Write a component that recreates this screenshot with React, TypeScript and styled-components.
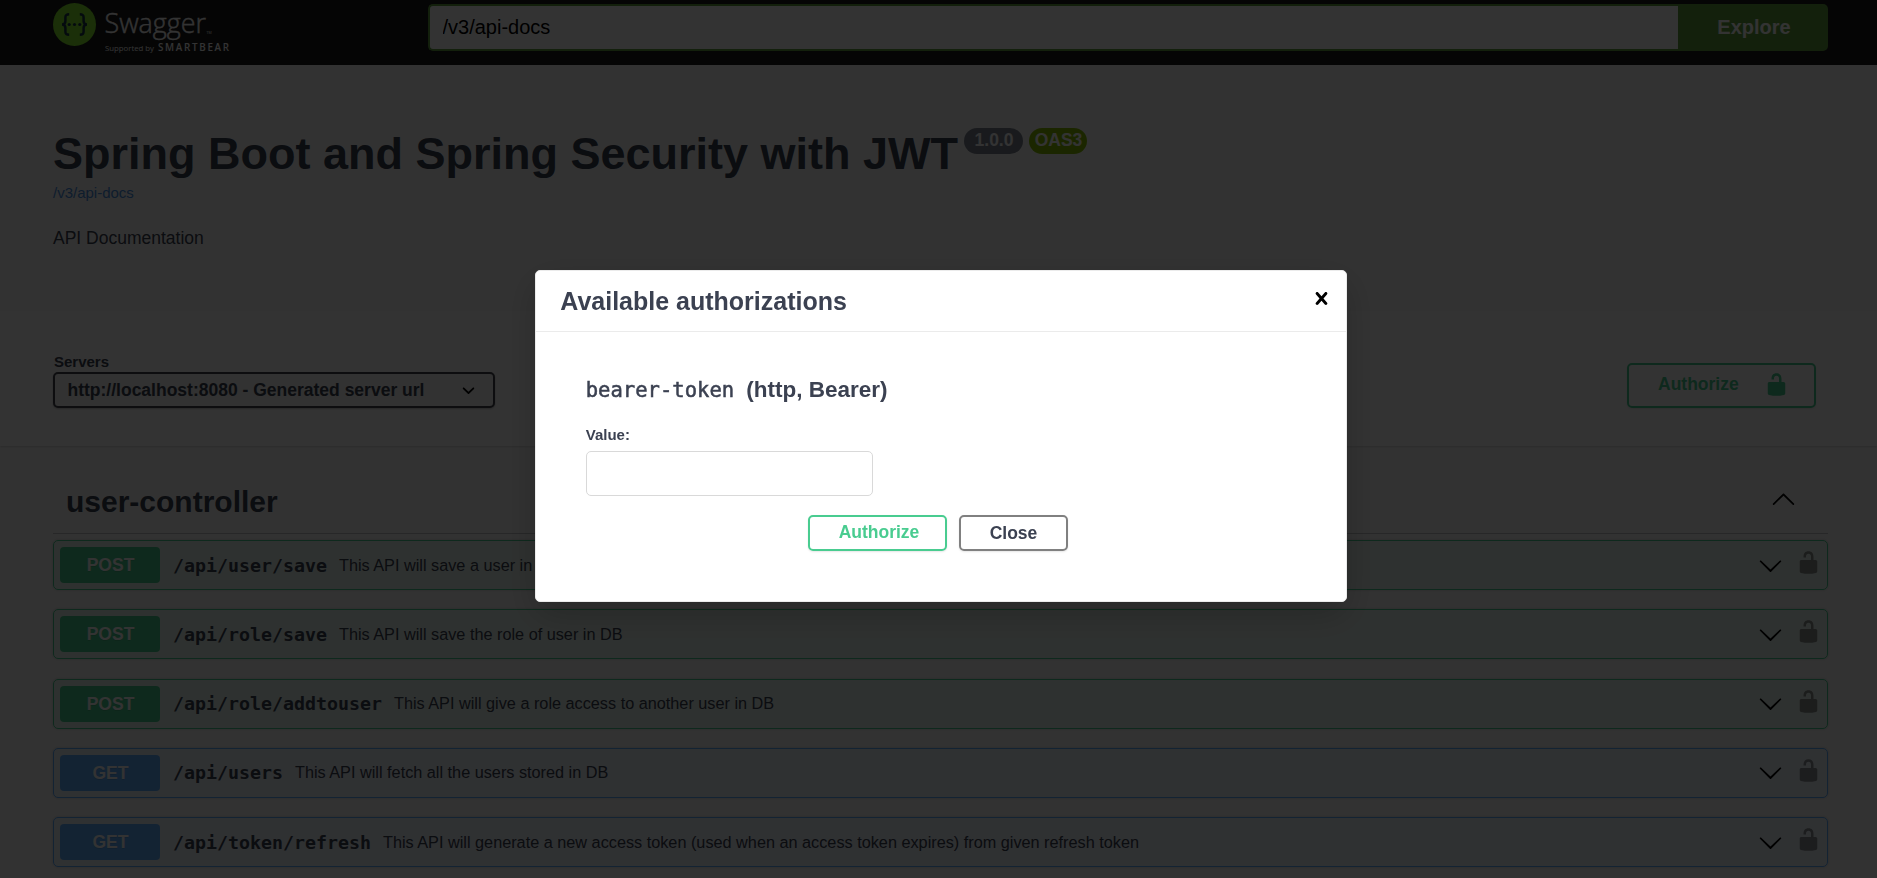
import React from 'react';
import styled, { createGlobalStyle } from 'styled-components';

const sans = "'Liberation Sans', Arial, sans-serif";
const mono = "'DejaVu Sans Mono', monospace";

const GlobalStyle = createGlobalStyle`
  *, *::before, *::after { box-sizing: border-box; }
  html, body { margin: 0; background: #fafafa; overflow: hidden; }
  body { font-family: ${sans}; color: #3b4151; }
  h2, h3, h4, p { margin: 0; }
  button, input { font-family: inherit; }
`;

const Page = styled.div`
  height: 878px;
  overflow: hidden;
  background: #fafafa;
`;

const Topbar = styled.header`
  display: flex;
  align-items: flex-start;
  height: 65px;
  padding: 0 49px 0 53px;
  background: #1b1b1b;
`;

const LogoSvg = styled.svg`
  display: block;
  flex: none;
  width: 375px;
  height: 65px;
`;

const SearchForm = styled.form`
  display: flex;
  flex: 1;
  height: 47px;
  margin-top: 4px;
`;

const UrlInput = styled.input`
  flex: 1;
  min-width: 0;
  padding: 0 12.5px;
  border: 2px solid #62a03f;
  border-right: 0;
  border-radius: 5px 0 0 5px;
  background: #fff;
  color: #000;
  font-size: 20px;
  outline: none;
`;

const ExploreButton = styled.button`
  width: 150px;
  padding: 0 0 1px 2px;
  border: 0;
  border-radius: 0 5px 5px 0;
  background: #62a03f;
  color: #fff;
  font-size: 20px;
  font-weight: 700;
`;

const Info = styled.section`
  height: 246px;
  padding: 63px 49px 0 53px;
`;

const TitleRow = styled.div`
  display: flex;
  align-items: flex-start;
`;

const Title = styled.h2`
  font-size: 45px;
  line-height: 52px;
  font-weight: 700;
`;

const Badge = styled.span<{ $bg: string; $width: number }>`
  width: ${(p) => p.$width}px;
  height: 26px;
  margin-left: 6px;
  padding-left: 1px;
  border-radius: 13px;
  background: ${(p) => p.$bg};
  color: #fff;
  font-size: 17.5px;
  line-height: 24px;
  font-weight: 700;
  text-align: center;
`;

const DocsLink = styled.a`
  display: block;
  margin-top: 4px;
  color: #4990e2;
  font-size: 15px;
  line-height: 18px;
`;

const Description = styled.p`
  margin-top: 26px;
  font-size: 17.5px;
  line-height: 20px;
`;

const SchemeBar = styled.section`
  display: flex;
  justify-content: space-between;
  align-items: flex-start;
  height: 135px;
  padding: 42px 61px 0 53px;
  background: #fff;
  box-shadow: 0 1px 2px rgba(0, 0, 0, 0.15);
`;

const ServersLabel = styled.div`
  padding-left: 1px;
  font-size: 15px;
  line-height: 18px;
  font-weight: 700;
`;

const ServerSelect = styled.div`
  display: flex;
  align-items: center;
  justify-content: space-between;
  width: 442px;
  height: 36px;
  margin-top: 1px;
  padding: 0 12px 0 12.5px;
  border: 2px solid #41444e;
  border-radius: 5px;
  background: #f7f7f7;
  box-shadow: 0 1px 2px rgba(0, 0, 0, 0.25);
  font-size: 17.5px;
  font-weight: 700;
`;

const AuthorizeButton = styled.button`
  display: flex;
  align-items: center;
  justify-content: space-between;
  width: 189px;
  height: 45px;
  margin-top: 10px;
  padding: 0 25px 2px 29px;
  border: 2px solid #49cc90;
  border-radius: 5px;
  background: transparent;
  box-shadow: 0 1px 2px rgba(0, 0, 0, 0.1);
  color: #49cc90;
  font-size: 17.5px;
  font-weight: 700;
`;

const Operations = styled.section`
  padding: 23px 49px 0 53px;
`;

const TagHeader = styled.div`
  display: flex;
  align-items: center;
  justify-content: space-between;
  height: 65px;
  margin-bottom: 6px;
  padding: 0 32px 0 13px;
  border-bottom: 1px solid rgba(59, 65, 81, 0.3);
`;

const TagName = styled.h3`
  padding-top: 2px;
  font-size: 30px;
  line-height: 36px;
  font-weight: 700;
`;

const ChevronSlot = styled.span`
  display: flex;
  margin-bottom: 5px;
`;

const OperationRow = styled.div<{ $color: string; $tint: string }>`
  display: flex;
  align-items: center;
  height: 50px;
  margin-bottom: 19.25px;
  padding: 0 6px;
  border: 1px solid ${(p) => p.$color};
  border-radius: 5px;
  background: ${(p) => p.$tint};
  box-shadow: 0 0 3px rgba(0, 0, 0, 0.19);
`;

const Method = styled.span<{ $color: string }>`
  width: 100px;
  height: 36px;
  padding-left: 1px;
  border-radius: 4px;
  background: ${(p) => p.$color};
  color: #fff;
  font-size: 17.5px;
  line-height: 36px;
  font-weight: 700;
  text-align: center;
  text-shadow: 0 1px 0 rgba(0, 0, 0, 0.1);
`;

const Path = styled.span`
  padding: 0 12px 0 13px;
  font-family: ${mono};
  font-size: 18.27px;
  font-weight: 700;
`;

const Summary = styled.span`
  flex: 1;
  font-size: 16.25px;
`;

const LockSlot = styled.span`
  display: flex;
  margin: 0 0 5px 13px;
  opacity: 0.4;
  color: #000;
`;

const Icon = styled.svg`
  display: block;
  flex: none;
  width: 25px;
  height: 25px;
  fill: currentColor;
`;

const BlackIcon = styled(Icon)`
  fill: #000;
`;

const Backdrop = styled.div`
  position: fixed;
  inset: 0;
  display: flex;
  align-items: flex-start;
  justify-content: center;
  padding: 270px 0 0 5px;
  background: rgba(0, 0, 0, 0.8);
`;

const Modal = styled.div`
  width: 812.5px;
  border: 1px solid #ebebeb;
  border-radius: 5px;
  background: #fff;
  box-shadow: 0 12.5px 37.5px rgba(0, 0, 0, 0.2);
`;

const ModalHeader = styled.div`
  display: flex;
  align-items: center;
  justify-content: space-between;
  height: 61px;
  padding: 0 12px 0 24.5px;
  border-bottom: 1px solid #ebebeb;
`;

const ModalTitle = styled.h3`
  font-size: 25px;
  line-height: 30px;
  font-weight: 700;
`;

const CloseIconButton = styled.button`
  margin: 0 0 6px;
  padding: 0;
  border: 0;
  background: none;
`;

const ModalBody = styled.div`
  padding: 45px 50px 50px;
`;

const SchemeName = styled.h4`
  display: flex;
  align-items: baseline;
  gap: 12px;
  height: 26px;
  font-size: 22.5px;
  line-height: 26px;
  font-weight: 700;
`;

const SchemeCode = styled.code`
  font-family: ${mono};
  font-size: 20.55px;
  font-weight: 400;
  -webkit-text-stroke: 0.5px currentColor;
`;

const ValueLabel = styled.label`
  display: block;
  margin: 23px 0 7px;
  font-size: 15px;
  line-height: 18px;
  font-weight: 700;
`;

const ValueInput = styled.input`
  display: block;
  width: 287px;
  height: 45px;
  border: 1px solid #d9d9d9;
  border-radius: 5px;
  background: #fff;
`;

const ModalActions = styled.div`
  display: flex;
  justify-content: center;
  gap: 11.5px;
  margin-top: 19px;
  padding-right: 6.5px;
`;

const ModalButton = styled.button<{ $width: number; $border: string; $color: string }>`
  width: ${(p) => p.$width}px;
  height: 36px;
  padding: 1px 0 0 1px;
  border: 2px solid ${(p) => p.$border};
  border-radius: 5px;
  background: transparent;
  box-shadow: 0 1px 2px rgba(0, 0, 0, 0.1);
  color: ${(p) => p.$color};
  font-size: 17.5px;
  font-weight: 700;
`;

const PrimaryModalButton = styled(ModalButton)`
  padding: 0 0 2px 3px;
`;

const UnlockIcon = () => (
  <Icon viewBox="0 0 20 20">
    <path d="M15.8 8H14V5.6C14 2.703 12.665 1 10 1 7.334 1 6 2.703 6 5.6V6h2v-.801C8 3.754 8.797 3 10 3c1.203 0 2 .754 2 2.199V8H4c-.553 0-1 .646-1 1.199V17c0 .549.428 1.139.951 1.307l1.197.387C5.672 18.861 6.55 19 7.1 19h5.8c.549 0 1.428-.139 1.951-.307l1.196-.387c.524-.167.953-.757.953-1.306V9.199C17 8.646 16.352 8 15.8 8z" />
  </Icon>
);

const ArrowDown = () => (
  <BlackIcon viewBox="0 0 20 20">
    <path d="M17.418 6.109c.272-.268.709-.268.979 0s.271.701 0 .969l-7.908 7.83c-.27.268-.707.268-.979 0l-7.908-7.83c-.27-.268-.27-.701 0-.969.271-.268.709-.268.979 0L10 13.25l7.418-7.141z" />
  </BlackIcon>
);

const ArrowUp = () => (
  <BlackIcon viewBox="0 0 20 20">
    <path d="M17.418 14.908c.272.268.709.268.979 0s.271-.701 0-.969l-7.908-7.83c-.27-.268-.707-.268-.979 0l-7.908 7.83c-.27.268-.27.701 0 .969.271.268.709.268.979 0L10 7.767l7.418 7.141z" />
  </BlackIcon>
);

const SelectArrow = () => (
  <BlackIcon viewBox="0 0 20 20">
    <path d="M13.418 7.859c.271-.268.709-.268.978 0 .27.268.272.701 0 .969l-3.908 3.83c-.27.268-.707.268-.979 0l-3.908-3.83c-.27-.267-.27-.701 0-.969.271-.268.709-.268.978 0L10 11l3.418-3.141z" />
  </BlackIcon>
);

const CloseIcon = () => (
  <BlackIcon viewBox="0 0 20 20">
    <path d="M14.348 14.849c-.469.469-1.229.469-1.697 0L10 11.819l-2.651 3.029c-.469.469-1.229.469-1.697 0-.469-.469-.469-1.229 0-1.697l2.758-3.15-2.759-3.152c-.469-.469-.469-1.228 0-1.697.469-.469 1.228-.469 1.697 0L10 8.183l2.651-3.031c.469-.469 1.228-.469 1.697 0 .469.469.469 1.229 0 1.697l-2.758 3.152 2.758 3.15c.469.469.469 1.229 0 1.698z" />
  </BlackIcon>
);

const Logo = () => (
  <LogoSvg viewBox="0 0 375 65">
    <circle cx="21.5" cy="24.5" r="21.5" fill="#85ea2d" />
    <g fill="none" stroke="#173647" strokeWidth="2.5">
      <path d="M16.200 14.300c-3 0-3.800.9-3.800 3.300v3.400c0 2.200-.9 3.500-3.400 3.500 2.500 0 3.400 1.300 3.400 3.500v3.400c0 2.400.8 3.300 3.800 3.300" />
      <path d="M26.800 14.300c3 0 3.800.9 3.800 3.300v3.400c0 2.200.9 3.500 3.400 3.500-2.500 0-3.400 1.300-3.400 3.500v3.400c0 2.400-.8 3.300-3.800 3.300" />
    </g>
    <g fill="#173647">
      <circle cx="16.2" cy="24.5" r="1.6" />
      <circle cx="21.5" cy="24.5" r="1.6" />
      <circle cx="26.8" cy="24.5" r="1.6" />
    </g>
    <g fill="#fff" fontFamily="'Open Sans', 'Noto Sans', sans-serif">
      <text
        x="51.5"
        y="33"
        fontSize="27.5"
        fontWeight="300"
        stroke="#fff"
        strokeWidth="0.4"
        textLength="101.5"
        lengthAdjust="spacingAndGlyphs"
      >
        Swagger
      </text>
      <text x="153.5" y="33.5" fontSize="3.500">TM</text>
      <text x="52" y="51" fontSize="8" textLength="49" lengthAdjust="spacingAndGlyphs">
        Supported by
      </text>
      <text x="105" y="51" fontSize="9.8" fontWeight="600" textLength="71" lengthAdjust="spacing">
        SMARTBEAR
      </text>
    </g>
  </LogoSvg>
);

type Verb = 'POST' | 'GET';

const verbColors: Record<Verb, { color: string; tint: string }> = {
  POST: { color: '#49cc90', tint: 'rgba(73, 204, 144, 0.1)' },
  GET: { color: '#61affe', tint: 'rgba(97, 175, 254, 0.1)' },
};

const operations: { verb: Verb; path: string; summary: string }[] = [
  { verb: 'POST', path: '/api/user/save', summary: 'This API will save a user in DB' },
  { verb: 'POST', path: '/api/role/save', summary: 'This API will save the role of user in DB' },
  { verb: 'POST', path: '/api/role/addtouser', summary: 'This API will give a role access to another user in DB' },
  { verb: 'GET', path: '/api/users', summary: 'This API will fetch all the users stored in DB' },
  {
    verb: 'GET',
    path: '/api/token/refresh',
    summary: 'This API will generate a new access token (used when an access token expires) from given refresh token',
  },
];

export default function App() {
  return (
    <>
      <GlobalStyle />
      <Page>
        <Topbar>
          <Logo />
          <SearchForm>
            <UrlInput defaultValue="/v3/api-docs" />
            <ExploreButton type="button">Explore</ExploreButton>
          </SearchForm>
        </Topbar>

        <Info>
          <TitleRow>
            <Title>Spring Boot and Spring Security with JWT</Title>
            <Badge $bg="#7d8492" $width={59}>1.0.0</Badge>
            <Badge $bg="#89bf04" $width={58}>OAS3</Badge>
          </TitleRow>
          <DocsLink>/v3/api-docs</DocsLink>
          <Description>API Documentation</Description>
        </Info>

        <SchemeBar>
          <div>
            <ServersLabel>Servers</ServersLabel>
            <ServerSelect>
              http://localhost:8080 - Generated server url
              <SelectArrow />
            </ServerSelect>
          </div>
          <AuthorizeButton type="button">
            Authorize
            <UnlockIcon />
          </AuthorizeButton>
        </SchemeBar>

        <Operations>
          <TagHeader>
            <TagName>user-controller</TagName>
            <ChevronSlot>
              <ArrowUp />
            </ChevronSlot>
          </TagHeader>
          {operations.map((op) => (
            <OperationRow key={op.path} $color={verbColors[op.verb].color} $tint={verbColors[op.verb].tint}>
              <Method $color={verbColors[op.verb].color}>{op.verb}</Method>
              <Path>{op.path}</Path>
              <Summary>{op.summary}</Summary>
              <ArrowDown />
              <LockSlot>
                <UnlockIcon />
              </LockSlot>
            </OperationRow>
          ))}
        </Operations>
      </Page>

      <Backdrop>
        <Modal role="dialog">
          <ModalHeader>
            <ModalTitle>Available authorizations</ModalTitle>
            <CloseIconButton type="button">
              <CloseIcon />
            </CloseIconButton>
          </ModalHeader>
          <ModalBody>
            <SchemeName>
              <SchemeCode>bearer-token</SchemeCode>
              <span>(http, Bearer)</span>
            </SchemeName>
            <ValueLabel>Value:</ValueLabel>
            <ValueInput />
            <ModalActions>
              <PrimaryModalButton type="button" $width={139} $border="#49cc90" $color="#49cc90">
                Authorize
              </PrimaryModalButton>
              <ModalButton type="button" $width={109} $border="#808080" $color="#3b4151">
                Close
              </ModalButton>
            </ModalActions>
          </ModalBody>
        </Modal>
      </Backdrop>
    </>
  );
}
